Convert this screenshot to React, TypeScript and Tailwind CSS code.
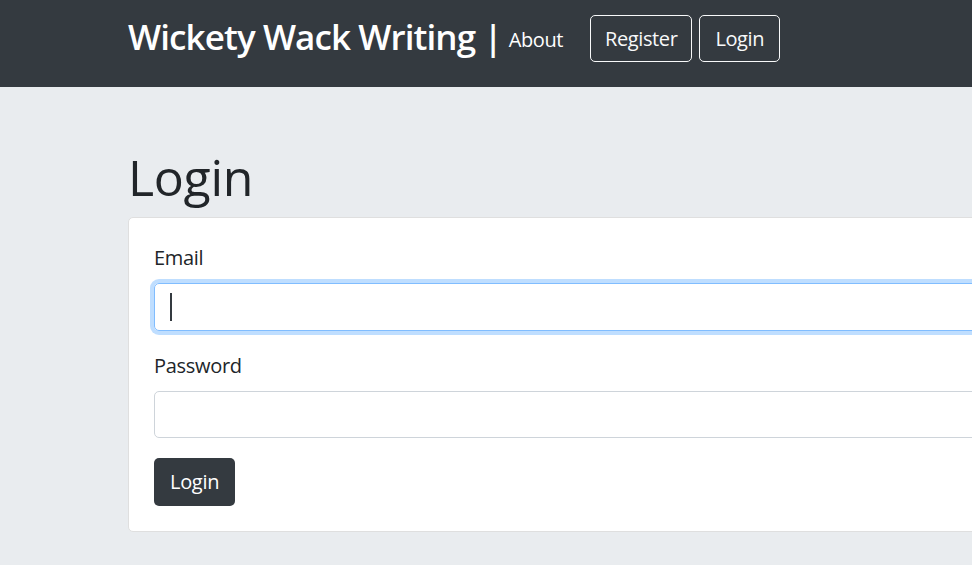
import React from "react";

export default function App() {
  const font = { fontFamily: '"Open Sans", "Noto Sans", Arial, sans-serif' };
  return (
    <div className="w-[972px] h-[565px] overflow-hidden bg-[#e9ecef]" style={font}>
      <nav className="h-[87px] bg-[#343a40] flex items-start pl-[128px] text-[#f8f9fa]">
        <span className="mt-[19px] text-[35px] leading-none font-semibold text-white tracking-[-0.9px] whitespace-nowrap">
          Wickety Wack Writing |
        </span>
        <a className="mt-[25px] ml-[7px] text-[20px] leading-[30px] text-white tracking-[-0.4px]">About</a>
        <div className="mt-[15px] ml-[27px] flex gap-[7px]">
          <button className="h-[47px] px-[14px] border border-[#f8f9fa] rounded-[5px] text-[20px] leading-[30px] text-[#f8f9fa] tracking-[-0.4px]">
            Register
          </button>
          <button className="h-[47px] px-[15px] border border-[#f8f9fa] rounded-[5px] text-[20px] leading-[30px] text-[#f8f9fa] tracking-[-0.4px]">
            Login
          </button>
        </div>
      </nav>
      <main className="pl-[128px] pt-[60px]">
        <h1 className="text-[50px] leading-[60px] font-medium text-[#212529] mb-[10px] tracking-[-0.3px]">Login</h1>
        <div className="w-[1000px] bg-white border border-[#dfdfdf] rounded-[5px] p-[25px]">
          <div className="mb-[20px]">
            <label className="block text-[20px] leading-[30px] text-[#212529] mb-[10px] tracking-[-0.3px]">Email</label>
            <div className="relative">
              <input
                readOnly
                className="block w-full h-[48px] px-[15px] border border-[#80bdff] rounded-[5px] shadow-[0_0_0_4px_rgba(0,123,255,0.25)] outline-none caret-transparent"
              />
              <span className="absolute left-[16px] top-[10px] w-[2px] h-[28px] bg-[#343a40]" />
            </div>
          </div>
          <div className="mb-[20px]">
            <label className="block text-[20px] leading-[30px] text-[#212529] mb-[10px] tracking-[-0.3px]">Password</label>
            <input
              readOnly
              type="password"
              className="block w-full h-[47px] px-[15px] border border-[#ced4da] rounded-[5px] outline-none caret-transparent"
            />
          </div>
          <button className="h-[48px] px-[16px] bg-[#343a40] rounded-[5px] text-[20px] leading-[30px] text-white tracking-[-0.3px]">
            Login
          </button>
        </div>
      </main>
    </div>
  );
}
